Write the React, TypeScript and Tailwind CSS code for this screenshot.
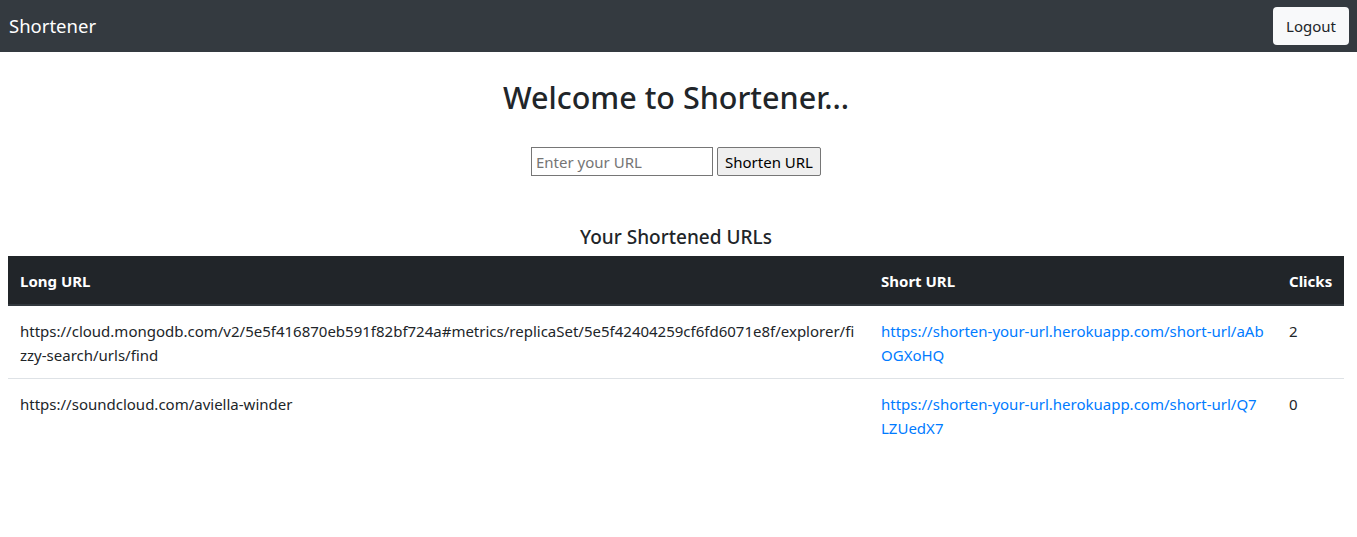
const rows = [
  {
    long: [
      "https://cloud.mongodb.com/v2/5e5f416870eb591f82bf724a#metrics/replicaSet/5e5f42404259cf6fd6071e8f/explorer/fi",
      "zzy-search/urls/find",
    ],
    short: ["https://shorten-your-url.herokuapp.com/short-url/aAb", "OGXoHQ"],
    clicks: 2,
  },
  {
    long: ["https://soundcloud.com/aviella-winder"],
    short: ["https://shorten-your-url.herokuapp.com/short-url/Q7", "LZUedX7"],
    clicks: 0,
  },
];

export default function App() {
  return (
    <div className="min-h-[537px] bg-white font-['Noto_Sans',sans-serif] text-[15px] leading-6 text-[#212529]">
      {/* Navbar */}
      <nav className="flex h-[52px] items-center justify-between bg-[#343a40] pr-2 pl-[9px]">
        <span className="text-[18.5px] leading-[30px] text-white">Shortener</span>
        <button className="h-[38px] w-[76px] rounded bg-[#f8f9fa] text-[15px] text-[#212529]">
          Logout
        </button>
      </nav>

      <div className="pr-[5px]">
        <h1 className="mt-[26px] text-center text-[30.5px] leading-[38px] font-medium">
          Welcome to Shortener...
        </h1>

        <form className="mt-[31px] flex justify-center gap-1">
          <input
            type="text"
            placeholder="Enter your URL"
            className="h-[29px] w-[182px] border border-[#767676] px-1 text-[15px] placeholder:text-[#757575]"
          />
          <button
            type="button"
            className="h-[29px] w-[104px] rounded-[2px] border border-[#767676] bg-[#efefef] text-[15px] text-black"
          >
            Shorten URL
          </button>
        </form>

        <h2 className="mt-[49px] text-center text-[19px] leading-6 font-medium">
          Your Shortened URLs
        </h2>
      </div>

      <table className="mt-[7px] ml-2 w-[1336px] table-fixed border-collapse text-left">
        <colgroup>
          <col className="w-[861px]" />
          <col className="w-[408px]" />
          <col className="w-[67px]" />
        </colgroup>
        <thead>
          <tr className="border-b-2 border-[#32383e] bg-[#212529] text-white">
            <th className="px-3 pt-[13px] pb-[11px] font-bold">Long URL</th>
            <th className="px-3 pt-[13px] pb-[11px] font-bold">Short URL</th>
            <th className="px-3 pt-[13px] pb-[11px] font-bold">Clicks</th>
          </tr>
        </thead>
        <tbody>
          {rows.map((row, i) => (
            <tr key={i} className={i === 0 ? "border-b border-[#dee2e6]" : ""}>
              <td className="px-3 pt-[13px] pb-[11px] align-top whitespace-nowrap">
                {row.long.map((line) => (
                  <div key={line}>{line}</div>
                ))}
              </td>
              <td className="px-3 pt-[13px] pb-[11px] align-top whitespace-nowrap">
                <a href="#" className="text-[#007bff]">
                  {row.short.map((line) => (
                    <div key={line}>{line}</div>
                  ))}
                </a>
              </td>
              <td className="px-3 pt-[13px] pb-[11px] align-top">{row.clicks}</td>
            </tr>
          ))}
        </tbody>
      </table>
    </div>
  );
}
